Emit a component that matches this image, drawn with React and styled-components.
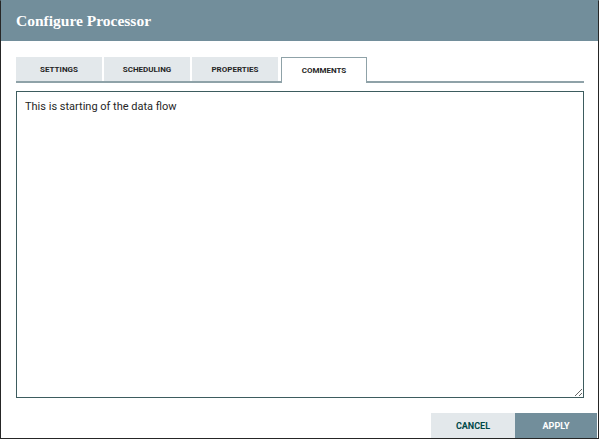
import React, { useState } from "react";
import styled, { createGlobalStyle } from "styled-components";

const GlobalStyle = createGlobalStyle`
	html, body {
		margin: 0;
		padding: 0;
		background: #ffffff;
	}
	* {
		box-sizing: border-box;
	}
`;

const tabs = ["Settings", "Scheduling", "Properties", "Comments"];

const App = () => {
	const [active, setActive] = useState("Comments");

	return (
		<>
			<GlobalStyle />
			<Dialog>
				<Header>
					<Title>Configure Processor</Title>
				</Header>
				<Body>
					<TabBar>
						{tabs.map((tab) => (
							<Tab
								key={tab}
								$active={tab === active}
								onClick={() => setActive(tab)}
							>
								{tab}
							</Tab>
						))}
					</TabBar>
					<Comments defaultValue="This is starting of the data flow" />
				</Body>
				<Footer>
					<Button>Cancel</Button>
					<Button $primary>Apply</Button>
				</Footer>
			</Dialog>
		</>
	);
};

export default App;

const Dialog = styled.div`
	width: 599px;
	height: 439px;
	display: flex;
	flex-direction: column;
	border: 1px solid #262626;
	border-top-color: #728e9b;
	background: #ffffff;
	font-family: Roboto, "Liberation Sans", sans-serif;
`;

const Header = styled.div`
	height: 40px;
	flex: none;
	display: flex;
	align-items: center;
	padding-left: 15px;
	background-color: #728e9b;
`;

const Title = styled.h2`
	margin: 0;
	color: #ffffff;
	font-family: "Liberation Serif", "DejaVu Serif", serif;
	font-size: 15.5px;
	font-weight: bold;
`;

const Body = styled.div`
	flex: 1;
	display: flex;
	flex-direction: column;
	padding: 16px 14px 0 15px;
`;

const TabBar = styled.div`
	display: flex;
	gap: 2px;
	height: 26px;
	border-bottom: 2px solid #8fa2a8;
`;

const Tab = styled.div`
	width: 86px;
	display: flex;
	align-items: center;
	justify-content: center;
	margin-left: ${(p) => (p.$active ? "1px" : "0")};
	height: ${(p) => (p.$active ? "26px" : "24px")};
	background-color: ${(p) => (p.$active ? "#ffffff" : "#e3e8eb")};
	border: ${(p) => (p.$active ? "1px solid #8fa2a8" : "none")};
	border-bottom: none;
	color: #262626;
	font-size: 8px;
	font-weight: bold;
	text-transform: uppercase;
	cursor: pointer;
	z-index: ${(p) => (p.$active ? 1 : 0)};
`;

const Comments = styled.textarea`
	margin-top: 8px;
	height: 307px;
	width: 568px;
	padding: 8px 8px;
	border: 1px solid #3d5c5e;
	border-radius: 0;
	outline: none;
	color: #262626;
	font-family: Roboto, "Liberation Sans", sans-serif;
	font-size: 11px;
	resize: both;
`;

const Footer = styled.div`
	height: 25px;
	flex: none;
	display: flex;
	justify-content: flex-end;
	padding-right: 1px;
`;

const Button = styled.button`
	width: ${(p) => (p.$primary ? "82px" : "84px")};
	height: 25px;
	border: 0;
	border-radius: 0;
	background-color: ${(p) => (p.$primary ? "#728e9b" : "#e3e8eb")};
	color: ${(p) => (p.$primary ? "#ffffff" : "#004849")};
	font-family: Roboto, "Liberation Sans", sans-serif;
	font-size: 9px;
	font-weight: bold;
	text-transform: uppercase;
	cursor: pointer;
`;
